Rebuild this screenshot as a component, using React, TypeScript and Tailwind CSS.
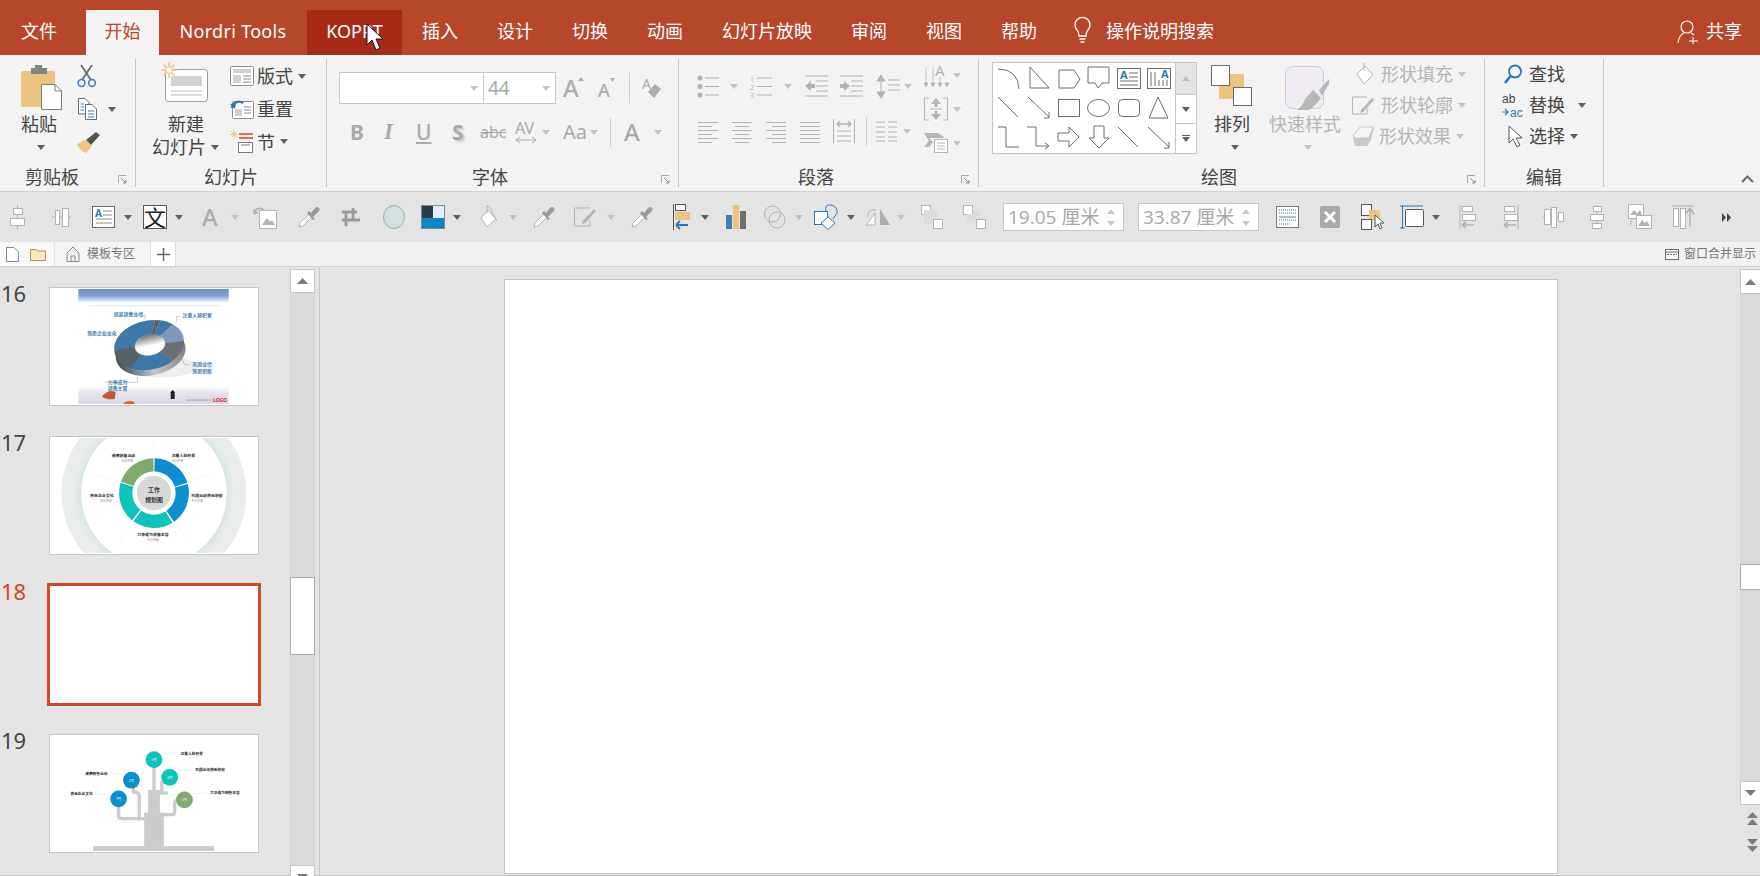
import type { ReactNode } from "react"

const G = "#b3b3b3"
const D = "#6a6a6a"

function Svg({ w, h, className, children }: { w: number; h: number; className?: string; children: ReactNode }) {
  return (
    <svg width={w} height={h} viewBox={`0 0 ${w} ${h}`} fill="none" className={`block shrink-0 overflow-visible ${className ?? ""}`}>
      {children}
    </svg>
  )
}

function Caret({ off, className }: { off?: boolean; className?: string }) {
  return (
    <Svg w={8} h={5} className={className}>
      <path d="M0 0H8L4 5Z" fill={off ? "#c2c2c2" : "#5f5f5f"} />
    </Svg>
  )
}

function Launcher() {
  return (
    <Svg w={9} h={9}>
      <path d="M.5 8V.5H8" stroke="#a8a8a8" />
      <path d="M3 3L8 8M8 5V8H5" stroke="#8a8a8a" />
    </Svg>
  )
}

function Group({ className, labelClass, label, launcher, children }: { className: string; labelClass: string; label: string; launcher?: boolean; children: ReactNode }) {
  return (
    <div className={`relative flex h-[128px] shrink-0 flex-col border-r border-[#c6c6c6] ${className}`}>
      <div className="flex h-[108px] items-start">{children}</div>
      <div className={`text-[18px] leading-[20px] text-[#444] ${labelClass}`}>{label}</div>
      {launcher && (
        <div className="absolute bottom-[3px] right-[8px]">
          <Launcher />
        </div>
      )}
    </div>
  )
}

function Lines({ rows, className, color = G }: { rows: [number, number][]; className?: string; color?: string }) {
  return (
    <Svg w={22} h={22} className={className}>
      {rows.map(([a, b], i) => (
        <path key={i} d={`M${a} ${2.5 + i * 4}H${b}`} stroke={color} strokeWidth="1" />
      ))}
    </Svg>
  )
}

function Dropper({ className }: { className?: string }) {
  return (
    <Svg w={23} h={24} className={className}>
      <path d="M2 22L3 18L13 8L16 11L6 21Z" stroke={G} fill="#fff" />
      <path d="M12 6L14 8L18 3Q20 1 22 3T20 8L16 12L18 14L16 15L10 8Z" fill="#9a9a9a" />
    </Svg>
  )
}

function PaperRect({ x, y, w, h, fill = "#fff", stroke = G }: { x: number; y: number; w: number; h: number; fill?: string; stroke?: string }) {
  return <rect x={x + 0.5} y={y + 0.5} width={w} height={h} fill={fill} stroke={stroke} />
}

function AlignIcon({ className, w = 18, flip }: { className?: string; w?: number; flip?: boolean }) {
  return (
    <Svg w={w} h={24} className={className}>
      <path d={flip ? `M${w - 1} 0V24` : "M1 0V24"} stroke={G} />
      <PaperRect x={3} y={1} w={10} h={5} />
      <PaperRect x={3} y={9} w={13} h={6} />
      <path d="M3 20H15M3 20L7 17M3 20L7 23" stroke={G} strokeWidth="1.6" />
    </Svg>
  )
}

function Shape({ children }: { children: ReactNode }) {
  return (
    <Svg w={24} h={24}>
      <g stroke="#6d6d6d" strokeWidth="1" fill="none">
        {children}
      </g>
    </Svg>
  )
}

const shapes: ReactNode[] = [
  <path d="M1 3Q21 3 22 23" />,
  <path d="M3 1V22H22Z" />,
  <path d="M2 4H17L23 13L17 22H2Z" />,
  <path d="M1 1H22V17H15L11 22L8 17H1Z" />,
  <>
    <rect x=".5" y="2.5" width="23" height="20" />
    <text x="3" y="13" fontSize="11" fontWeight="700" fill="#2e75b6" stroke="none">A</text>
    <path d="M12 7H21M12 11H21M3 15H21M3 19H21" />
  </>,
  <>
    <rect x=".5" y="2.5" width="23" height="20" />
    <text x="14" y="12" fontSize="11" fontWeight="700" fill="#2e75b6" stroke="none">A</text>
    <path d="M4 6V20M8 6V20M12 14V20M16 14V20M20 14V20" />
  </>,
  <path d="M1 1L21 21" />,
  <>
    <path d="M1 1L22 21" />
    <path d="M22 16V22H17" />
  </>,
  <rect x="1.5" y="3.5" width="21" height="17" />,
  <ellipse cx="11.5" cy="12" rx="11" ry="8.5" />,
  <rect x="1.5" y="3.5" width="21" height="17" rx="4" />,
  <path d="M11 1L2 22H21Z" />,
  <path d="M1 1H9V21H22" />,
  <>
    <path d="M0 1H9V20H21" />
    <path d="M18 17L22 20L18 23" />
  </>,
  <path d="M1 7H12V1L22 11L12 21V15H1Z" />,
  <path d="M7 0H17V12H22L12 22L2 12H7Z" />,
  <path d="M1 1L21 21" />,
  <>
    <path d="M1 1L22 21" />
    <path d="M22 16V22H17" />
  </>,
]

function sector(cx: number, cy: number, rx: number, ry: number, k: number, a: number, b: number) {
  const p = (t: number, rr: number) => {
    const r = (t * Math.PI) / 180
    return `${(cx + rx * rr * Math.cos(r)).toFixed(2)} ${(cy + ry * rr * Math.sin(r)).toFixed(2)}`
  }
  const big = b - a > 180 ? 1 : 0
  return `M${p(a, 1)}A${rx} ${ry} 0 ${big} 1 ${p(b, 1)}L${p(b, k)}A${rx * k} ${ry * k} 0 ${big} 0 ${p(a, k)}Z`
}

function ThumbSix() {
  return (
    <svg viewBox="0 0 210 119" className="block h-full w-full">
      <defs>
        <linearGradient id="sky" x1="0" y1="0" x2="0" y2="1">
          <stop offset="0" stopColor="#6c92cb" />
          <stop offset="0.5" stopColor="#7f9fd0" />
          <stop offset="1" stopColor="#ffffff" />
        </linearGradient>
        <linearGradient id="floor" x1="0" y1="0" x2="0" y2="1">
          <stop offset="0" stopColor="#ffffff" />
          <stop offset="0.4" stopColor="#e6e1ec" />
          <stop offset="1" stopColor="#dcd7e6" />
        </linearGradient>
        <linearGradient id="hole" x1="0" y1="0" x2="0" y2="1">
          <stop offset="0" stopColor="#6c7274" />
          <stop offset="0.55" stopColor="#ffffff" />
        </linearGradient>
        <linearGradient id="side" x1="0" y1="0" x2="1" y2="0">
          <stop offset="0" stopColor="#3f4a50" />
          <stop offset="0.5" stopColor="#c4c8ca" />
          <stop offset="1" stopColor="#7c8082" />
        </linearGradient>
      </defs>
      <rect x="28" y="1" width="153" height="14" fill="url(#sky)" />
      <path d="M39 18H172" stroke="#bbb" strokeWidth=".6" strokeDasharray="1 .6" />
      <rect x="28" y="100" width="153" height="18" fill="url(#floor)" />
      <ellipse cx="112" cy="80" rx="38" ry="11" fill="#eee" />
      <g transform="rotate(-12 100 58)">
        <ellipse cx="100" cy="66" rx="36" ry="23" fill="url(#side)" />
        <path d={sector(100, 58, 36, 25, 0.42, 185, 288)} fill="#3d78a9" />
        <path d={sector(100, 58, 36, 25, 0.42, 288, 298)} fill="#566268" />
        <path d={sector(100, 58, 36, 25, 0.42, 298, 322)} fill="#3d78a9" />
        <path d={sector(100, 58, 36, 25, 0.42, 322, 368)} fill="#7f99bd" />
        <path d={sector(100, 58, 36, 25, 0.42, 8, 55)} fill="#6d7072" />
        <path d={sector(100, 58, 36, 25, 0.42, 55, 130)} fill="#3d78a9" />
        <path d={sector(100, 58, 36, 25, 0.42, 130, 185)} fill="#566268" />
        <ellipse cx="101" cy="58" rx="15.500" ry="10.500" fill="url(#hole)" />
      </g>
      <path d="M88 28H96V32M131 29H128V35M141 78H136L133 70M55 96H88V90M56 47H67" fill="none" stroke="#aaa" strokeWidth=".6" />
      <g fontSize="5" fontWeight="700" fill="#4d7fb0">
        <text x="64" y="28">提高销售业绩</text>
        <text x="134" y="30">注重人脉积累</text>
        <text x="37" y="48">熟悉企业文化</text>
        <text x="144" y="79">巩固业绩</text>
        <text x="144" y="86">熟悉职能</text>
        <text x="58" y="98">力争成为</text>
        <text x="58" y="104">销售主管</text>
      </g>
      <path d="M52 110Q60 102 66 106L65 113Q56 114 52 110Z" fill="#c8582e" />
      <path d="M73 118Q78 113 85 116V118Z" fill="#d9662e" />
      <path d="M122 106Q124 102 126 106V113H122Z" fill="#222" />
      <text x="165" y="116" fontSize="5" fontWeight="700" fill="#c8281e">LOGO</text>
      <path d="M138 114H164" stroke="#777" strokeWidth=".7" strokeDasharray="1 .4" />
    </svg>
  )
}

function ThumbSeven() {
  return (
    <svg viewBox="0 0 210 119" className="block h-full w-full">
      <defs>
        <radialGradient id="halo" gradientUnits="userSpaceOnUse" cx="105" cy="57" r="95">
          <stop offset="0.78" stopColor="#d8e6e5" />
          <stop offset="0.86" stopColor="#e8ecec" />
          <stop offset="1" stopColor="#ececec" />
        </radialGradient>
      </defs>
      <clipPath id="c17">
        <rect x="0" y="1" width="210" height="117" />
      </clipPath>
      <g clipPath="url(#c17)">
        <circle cx="105" cy="57" r="94" fill="url(#halo)" />
        <circle cx="105" cy="57" r="74" fill="#fff" />
        <g stroke="#eee" strokeWidth=".6">
          <path d="M105 1V22M163 38L131 48M140 106L123 82M70 106L87 82M45 38L80 48" />
        </g>
        <path d={sector(105, 57, 35.5, 35.5, 0.62, -89, -17)} fill="#0b8fd0" />
        <path d={sector(105, 57, 35.5, 35.5, 0.62, -15, 55)} fill="#0b8fd0" />
        <path d={sector(105, 57, 35.5, 35.5, 0.62, 58, 126)} fill="#0cc4bb" />
        <path d={sector(105, 57, 35.5, 35.5, 0.62, 129, 197)} fill="#0cc4bb" />
        <path d={sector(105, 57, 35.5, 35.5, 0.62, 199, 269)} fill="#80a96f" />
        <circle cx="105" cy="57" r="17.5" fill="#d8d8d8" />
        <g fill="#333" fontWeight="700">
          <text x="105" y="56" fontSize="6" textAnchor="middle">工作</text>
          <text x="105" y="66" fontSize="6" textAnchor="middle">规划图</text>
          <g fontSize="4">
            <text x="62" y="20">提高销售业绩</text>
            <text x="123" y="20">注重人脉积累</text>
            <text x="143" y="61">巩固业绩熟悉职能</text>
            <text x="88" y="101">力争成为销售主管</text>
            <text x="40" y="61">熟悉企业文化</text>
          </g>
        </g>
        <g fill="#999" fontSize="3">
          <text x="72" y="25">专业技能</text>
          <text x="123" y="25">专业技能</text>
          <text x="143" y="66">专业技能</text>
          <text x="98" y="106">专业技能</text>
          <text x="50" y="66">专业技能</text>
        </g>
      </g>
    </svg>
  )
}

function ThumbNine() {
  return (
    <svg viewBox="0 0 210 119" className="block h-full w-full">
      <rect x="43" y="113" width="123" height="5" fill="#cbcbcb" />
      <rect x="95" y="79" width="20" height="34" fill="#cbcbcb" />
      <rect x="99" y="56" width="12" height="24" fill="#cbcbcb" />
      <g stroke="#cbcbcb" strokeWidth="3.4" fill="none">
        <path d="M105 30V58" />
        <path d="M69 70V82Q69 85 72 85H96" />
        <path d="M84 50V58Q90 58 90 62V84" />
        <path d="M113 59V48L118 44M110 59H119" />
        <path d="M114 81H124Q126 81 126 78V70Q126 66 130 66" />
      </g>
      <g>
        <circle cx="105" cy="25" r="8.5" fill="#0cc4bb" />
        <circle cx="82" cy="46" r="8.5" fill="#0b8fd0" />
        <circle cx="121" cy="43" r="8.5" fill="#0cc4bb" />
        <circle cx="69" cy="65" r="8.5" fill="#0b8fd0" />
        <circle cx="136" cy="66" r="8.5" fill="#80a96f" />
      </g>
      <g fill="#fff" fontSize="3.5" textAnchor="middle">
        <text x="105" y="26.5">3月</text>
        <text x="82" y="47.5">2月</text>
        <text x="121" y="44.5">4月</text>
        <text x="69" y="66.5">1月</text>
        <text x="136" y="67.5">5月</text>
      </g>
      <g stroke="#e2eef7" strokeWidth=".8">
        <path d="M113 19L129 18M61 39H75M45 60H60M129 36L145 35M144 60L160 59" />
      </g>
      <g fill="#333" fontSize="3.8" fontWeight="700">
        <text x="132" y="20">注重人脉积累</text>
        <text x="147" y="37">巩固业绩熟悉职能</text>
        <text x="162" y="60">力争成为销售主管</text>
        <text x="35" y="41">提高销售业绩</text>
        <text x="20" y="61">熟悉企业文化</text>
      </g>
    </svg>
  )
}

function ScrollBtn({ dir, className }: { dir: "up" | "down"; className?: string }) {
  return (
    <div className={`flex shrink-0 items-center justify-center border border-[#c6c6c6] bg-white ${className ?? ""}`}>
      <Svg w={11} h={6}>
        <path d={dir === "up" ? "M0 6L5.5 0L11 6Z" : "M0 0H11L5.5 6Z"} fill="#7a7a7a" />
      </Svg>
    </div>
  )
}

function SizeInput({ value, className }: { value: string; className?: string }) {
  return (
    <div className={`flex h-[28px] w-[121px] shrink-0 items-center justify-between border border-[#c6c6c6] bg-white pl-[4px] pr-[8px] ${className ?? ""}`}>
      <span className="font-['Open_Sans','Noto_Sans_CJK_SC',sans-serif] text-[19px] leading-[26px] text-[#a8a8a8]">{value}</span>
      <span className="flex flex-col gap-[7px]">
        <Svg w={8} h={5}>
          <path d="M0 5L4 0L8 5Z" fill="#c8c8c8" />
        </Svg>
        <Svg w={8} h={5}>
          <path d="M0 0H8L4 5Z" fill="#c8c8c8" />
        </Svg>
      </span>
    </div>
  )
}

export default function App() {
  return (
    <div className="flex h-[876px] w-[1760px] flex-col overflow-hidden bg-[#e4e4e4] font-['Noto_Sans','Noto_Sans_CJK_SC',sans-serif]">
      {/* title tabs */}
      <div className="relative flex h-[55px] shrink-0 items-end bg-[#b7472a] text-[18px] text-white">
        <div className="flex h-[45px] w-[86px] items-center pb-[2px] pl-[21px]">文件</div>
        <div className="flex h-[45px] w-[73px] items-center justify-center bg-[#f3f3f3] pb-[2px] text-[#b7472a]">开始</div>
        <div className="flex h-[45px] w-[148px] items-center justify-center pb-[2px] tracking-[0.3px]">Nordri Tools</div>
        <div className="flex h-[45px] w-[95px] items-center justify-center bg-[#a72a17] pb-[2px]">KOPPT</div>
        <div className="ml-[20px] flex h-[45px] items-center gap-[39px] pb-[2px]">
          <span>插入</span>
          <span>设计</span>
          <span>切换</span>
          <span>动画</span>
          <span>幻灯片放映</span>
          <span>审阅</span>
          <span>视图</span>
          <span>帮助</span>
        </div>
        <div className="ml-[37px] flex h-[45px] items-center pb-[2px]">
          <Svg w={17} h={25}>
            <path d="M5 17Q5 13 3 11A7.500 7.500 0 1 1 14 11Q12 13 12 17Z" stroke="#fff" strokeWidth="1.300" />
            <path d="M5.500 20H11.500M6.500 23H10.500" stroke="#fff" strokeWidth="1.600" />
          </Svg>
          <span className="ml-[15px]">操作说明搜索</span>
        </div>
        <div className="ml-auto mr-[18px] flex h-[45px] items-center pb-[2px]">
          <Svg w={22} h={24}>
            <circle cx="10" cy="7" r="6" stroke="#fff" strokeWidth="1.100" />
            <path d="M1 23Q2 15 7 13M14 13Q16 14 17 15M16 17V24M12 21H21" stroke="#fff" strokeWidth="1.100" />
          </Svg>
          <span className="ml-[7px]">共享</span>
        </div>
        {/* mouse pointer over the KOPPT tab */}
        <div className="absolute left-[366px] top-[23px]">
          <Svg w={19} h={28}>
            <path d="M1 1V22L6 17L10 27L14 25L10 16H17Z" fill="#fff" stroke="#111" />
          </Svg>
        </div>
      </div>

      {/* ribbon */}
      <div className="flex h-[137px] shrink-0 border-b border-[#d2d2d2] bg-[#f3f3f3] pt-[4px]">
        <Group className="w-[136px]" label="剪贴板" labelClass="ml-[25px]" launcher>
          <div className="ml-[21px] flex w-[42px] flex-col">
            <Svg w={41} h={45} className="mt-[6px]">
              <rect x="0" y="6" width="34" height="36" rx="2" fill="#ecc47f" />
              <path d="M10 6V3H14V0H21V3H26V9H10Z" fill="#7f8583" />
              <path d="M20.500 19.500H34L40.500 26V44.500H20.500Z" fill="#fff" stroke="#7a7a7a" />
              <path d="M34 19.500V26H40.500" stroke="#7a7a7a" />
            </Svg>
            <span className="mt-[5px] text-[18px] leading-[18px] text-[#444]">粘贴</span>
            <Caret className="ml-[16px] mt-[12px]" />
          </div>
          <div className="ml-[14px] flex flex-col">
            <Svg w={20} h={22} className="mt-[6px]">
              <path d="M4 0L14 15M15 0L5 15" stroke="#6a6a6a" strokeWidth="1.800" />
              <circle cx="4.500" cy="18" r="3.400" stroke="#3f7eb5" strokeWidth="1.500" />
              <circle cx="15" cy="18" r="3.400" stroke="#3f7eb5" strokeWidth="1.500" />
            </Svg>
            <div className="mt-[11px] flex items-center">
              <Svg w={20} h={22}>
                <path d="M1.500 .5H8L12 4.500V16H1.500Z" fill="#fff" stroke="#6a6a6a" />
                <path d="M8.500 6.500H15L19.500 11V21.500H8.500Z" fill="#fff" stroke="#6a6a6a" />
                <path d="M3.500 6H7M3.500 9H7M3.500 12H7M11 13H17M11 16H17M11 19H17" stroke="#3f7eb5" />
              </Svg>
              <Caret className="ml-[11px]" />
            </div>
            <Svg w={23} h={21} className="mt-[12px]">
              <path d="M0 12L8 8L15 14L9 21Q4 20 0 12Z" fill="#ecc47f" />
              <path d="M9 8L14 13L23 3L19 0Z" fill="#555" />
            </Svg>
          </div>
        </Group>

        <Group className="w-[191px]" label="幻灯片" labelClass="ml-[68px]">
          <div className="ml-[16px] flex w-[72px] flex-col">
            <Svg w={48} h={41} className="ml-[9px] mt-[3px]">
              <rect x="4.500" y="7.500" width="42" height="32" rx="3" fill="#fff" stroke="#9a9a9a" />
              <rect x="10" y="14" width="31" height="10" fill="#d3d3d3" />
              <path d="M10 29H41M10 33H41" stroke="#bdbdbd" />
              <path d="M8 0V16M0 8H16M2.500 2.500L13.500 13.500M13.500 2.500L2.500 13.500" stroke="#ecc47f" strokeWidth="1.500" />
              <circle cx="8" cy="8" r="3.500" fill="#f3f3f3" stroke="#ecc47f" />
            </Svg>
            <span className="ml-[16px] mt-[12px] text-[18px] leading-[18px] text-[#444]">新建</span>
            <div className="mt-[5px] flex items-center">
              <span className="text-[18px] leading-[18px] text-[#444]">幻灯片</span>
              <Caret className="ml-[5px]" />
            </div>
          </div>
          <div className="ml-[6px] flex flex-col">
            <div className="mt-[7px] flex h-[20px] items-center">
              <Svg w={24} h={20}>
                <rect x=".5" y=".5" width="23" height="19" rx="1" fill="#fff" stroke="#8a8a8a" />
                <rect x="3" y="3" width="18" height="4" fill="#cfcfcf" />
                <rect x="3" y="9" width="8" height="8" fill="#cfcfcf" />
                <path d="M13 10H21M13 13H21M13 16H21" stroke="#8a8a8a" />
              </Svg>
              <span className="ml-[3px] text-[18px] leading-[18px] text-[#444]">版式</span>
              <Caret className="ml-[5px]" />
            </div>
            <div className="mt-[13px] flex h-[20px] items-center">
              <Svg w={24} h={20}>
                <rect x="2.500" y="2.500" width="21" height="17" rx="1" fill="#fff" stroke="#8a8a8a" />
                <rect x="5" y="10" width="7" height="7" fill="#cfcfcf" />
                <path d="M14 8H21M14 11H21M14 14H21" stroke="#8a8a8a" />
                <path d="M2 9A7 7 0 0 1 13 4" stroke="#2e75b6" strokeWidth="2.400" />
                <path d="M0 5L5 10L6 4Z" fill="#2e75b6" />
              </Svg>
              <span className="ml-[3px] text-[18px] leading-[18px] text-[#444]">重置</span>
            </div>
            <div className="mt-[11px] flex h-[23px] items-center">
              <Svg w={24} h={23}>
                <path d="M4 0V9M0 4.500H8M1.500 1.500L6.500 7.500M6.500 1.500L1.500 7.500" stroke="#ecc47f" />
                <path d="M9 4H23M9 8H23" stroke="#d24726" strokeWidth="1.300" />
                <rect x="8.500" y="12.500" width="14" height="10" fill="#fff" stroke="#7a7a7a" />
                <path d="M11 15H20" stroke="#7a7a7a" />
              </Svg>
              <span className="ml-[3px] text-[18px] leading-[18px] text-[#444]">节</span>
              <Caret className="ml-[5px]" />
            </div>
          </div>
        </Group>

        <Group className="w-[352px]" label="字体" labelClass="ml-[145px]" launcher>
          <div className="flex flex-col">
            <div className="ml-[12px] mt-[13px] flex h-[32px] items-center">
              <div className="flex h-[32px] w-[145px] items-center justify-end border border-[#c6c6c6] bg-white pr-[5px]">
                <Caret off />
              </div>
              <div className="flex h-[32px] w-[72px] items-center justify-between border border-l-0 border-[#c6c6c6] bg-white pl-[4px] pr-[5px]">
                <span className="text-[19px] text-[#a8a8a8]">44</span>
                <Caret off />
              </div>
              <div className="ml-[7px] flex h-[32px] w-[21px] items-start">
                <span className="text-[24px] font-medium leading-[32px] text-[#adadad]">A</span>
                <Svg w={6} h={4} className="-ml-[1px] mt-[5px]">
                  <path d="M0 4L3 0L6 4Z" fill="#adadad" />
                </Svg>
              </div>
              <div className="ml-[14px] flex h-[32px] w-[15px] items-start">
                <span className="mt-[3px] text-[18px] font-medium leading-[30px] text-[#adadad]">A</span>
                <Svg w={5} h={4} className="mt-[6px]">
                  <path d="M0 0H5L2.500 4Z" fill="#adadad" />
                </Svg>
              </div>
              <div className="ml-[16px] h-[30px] w-px bg-[#d0d0d0]" />
              <Svg w={19} h={22} className="ml-[12px]">
                <text x="0" y="12" fontSize="14" fill="#adadad">A</text>
                <path d="M6 15L13 7L19 12L12 21Z" fill="#adadad" />
              </Svg>
            </div>
            <div className="ml-[23px] mt-[16px] flex h-[24px] items-center text-[#a9a9a9]">
              <span className="w-[13px] text-[21px] font-bold leading-[24px]">B</span>
              <span className="ml-[21px] w-[11px] font-['Liberation_Serif',serif] text-[23px] font-bold italic leading-[24px]">I</span>
              <span className="ml-[21px] w-[14px] text-[21px] font-medium underline leading-[24px]">U</span>
              <span className="ml-[22px] w-[12px] text-[21px] font-bold leading-[24px] [text-shadow:2px_2px_2px_#c8c8c8]">S</span>
              <span className="ml-[16px] w-[24px] text-[16px] leading-[24px] line-through">abc</span>
              <Svg w={22} h={24} className="ml-[11px]">
                <text x="0" y="14" fontSize="16" fill="#a9a9a9">AV</text>
                <path d="M1 20H21M1 20L5 17M1 20L5 23M21 20L17 17M21 20L17 23" stroke="#adadad" />
              </Svg>
              <Caret off className="ml-[5px]" />
              <span className="ml-[13px] w-[23px] text-[20px] leading-[24px]">Aa</span>
              <Caret off className="ml-[4px]" />
              <div className="ml-[12px] h-[29px] w-px bg-[#d0d0d0]" />
              <span className="ml-[13px] w-[15px] text-[24px] font-medium leading-[24px]">A</span>
              <Caret off className="ml-[15px]" />
            </div>
          </div>
        </Group>

        <Group className="w-[300px]" label="段落" labelClass="ml-[119px]" launcher>
          <div className="flex w-[245px] flex-col">
            <div className="mt-[16px] flex h-[23px] items-center">
              <Svg w={22} h={23} className="ml-[18px]">
                <circle cx="3" cy="3" r="2.500" fill={G} />
                <circle cx="3" cy="11.500" r="2.500" fill={G} />
                <circle cx="3" cy="20" r="2.500" fill={G} />
                <path d="M8 3H22M8 11.500H22M8 20H22" stroke={G} />
              </Svg>
              <Caret off className="ml-[11px]" />
              <Svg w={22} h={23} className="ml-[12px]">
                <text x="0" y="7" fontSize="7" fill={G}>1</text>
                <text x="0" y="15" fontSize="7" fill={G}>2</text>
                <text x="0" y="23" fontSize="7" fill={G}>3</text>
                <path d="M7 3H22M7 11.500H22M7 20H22" stroke={G} />
              </Svg>
              <Caret off className="ml-[12px]" />
              <Svg w={23} h={23} className="ml-[13px]">
                <path d="M0 1H23M11 6H23M11 11H23M11 16H23M0 21H23" stroke={G} />
                <path d="M0 11L6 6V9H10V13H6V16Z" fill={G} />
              </Svg>
              <Svg w={23} h={23} className="ml-[12px]">
                <path d="M0 1H23M11 6H23M11 11H23M11 16H23M0 21H23" stroke={G} />
                <path d="M10 11L4 6V9H0V13H4V16Z" fill={G} />
              </Svg>
              <Svg w={23} h={23} className="ml-[14px]">
                <path d="M4 1V22M4 0L8 6H0ZM4 23L0 17H8Z" fill={G} stroke={G} />
                <path d="M11 5H23M11 10H23M11 15H23" stroke={G} />
              </Svg>
              <Caret off className="ml-[4px]" />
            </div>
            <div className="mt-[22px] flex h-[22px] items-center">
              <Lines className="ml-[19px] -mr-[2px]" rows={[[0, 20], [0, 14], [0, 20], [0, 14], [0, 20], [0, 14]]} />
              <Lines className="ml-[14px] -mr-[2px]" rows={[[0, 20], [3, 17], [0, 20], [3, 17], [0, 20], [3, 17]]} />
              <Lines className="ml-[14px] -mr-[2px]" rows={[[0, 20], [6, 20], [0, 20], [6, 20], [0, 20], [6, 20]]} />
              <Lines className="ml-[14px] -mr-[2px]" rows={[[0, 20], [0, 20], [0, 20], [0, 20], [0, 20], [0, 20]]} />
              <Svg w={22} h={24} className="ml-[13px]">
                <path d="M.5 0V24M21.500 0V24M4 12H18M4 17H18M4 22H18" stroke={G} />
                <path d="M4 5H18M4 5L7 2M4 5L7 8M18 5L15 2M18 5L15 8" stroke={G} strokeWidth="1.300" />
              </Svg>
              <div className="ml-[11px] h-[29px] w-px bg-[#d0d0d0]" />
              <Svg w={21} h={22} className="ml-[9px]">
                <path d="M0 2H9M12 2H21M0 7H9M12 7H21M0 12H9M12 12H21M0 17H9M12 17H21M0 21H9M12 21H21" stroke={G} />
              </Svg>
              <Caret off className="ml-[6px]" />
            </div>
          </div>
          <div className="flex flex-col">
            <div className="mt-[4px] flex h-[25px] items-center">
              <Svg w={24} h={25}>
                <path d="M2 4V23M9 4V23M16 14V23M2 24L0 20H4ZM9 24L7 20H11ZM16 24L14 20H18ZM23 24L21 20H25Z" stroke={G} fill={G} strokeWidth=".7" />
                <text x="11" y="13" fontSize="15" fill={G}>A</text>
              </Svg>
              <Caret off className="ml-[5px]" />
            </div>
            <div className="mt-[9px] flex h-[24px] items-center">
              <Svg w={24} h={24}>
                <path d="M5 1H.5V23H5M19 1H23.500V23H19" stroke={G} />
                <path d="M12 1L7 7H10.500V10H13.500V7H17ZM12 23L7 17H10.500V14H13.500V17H17Z" fill={G} />
                <path d="M6 12H18" stroke={G} />
              </Svg>
              <Caret off className="ml-[5px]" />
            </div>
            <div className="mt-[12px] flex h-[20px] items-center">
              <Svg w={24} h={20}>
                <path d="M0 0H14L21 5H5L9 9L5 14H0L5 8Z" fill={G} />
                <rect x="10.500" y="6.500" width="13" height="13" fill="#fff" stroke={G} />
                <path d="M13 10H21M13 13H21M13 16H21" stroke={G} />
              </Svg>
              <Caret off className="ml-[5px]" />
            </div>
          </div>
        </Group>

        <Group className="w-[506px]" label="绘图" labelClass="ml-[222px]" launcher>
          <div className="ml-[13px] mt-[3px] flex h-[92px] w-[205px] shrink-0 border border-[#c6c6c6] bg-white">
            <div className="grid h-full w-[182px] grid-cols-[repeat(6,30px)] grid-rows-[repeat(3,30px)] pl-[4px] pt-[3px]">
              {shapes.map((s, i) => (
                <Shape key={i}>{s}</Shape>
              ))}
            </div>
            <div className="flex w-[22px] flex-col border-l border-[#c6c6c6]">
              <div className="flex h-[32px] items-center justify-center border-b border-[#c6c6c6] bg-[#e4e4e4]">
                <Svg w={8} h={5}>
                  <path d="M0 5L4 0L8 5Z" fill="#c2c2c2" />
                </Svg>
              </div>
              <div className="flex h-[29px] items-center justify-center border-b border-[#c6c6c6]">
                <Caret />
              </div>
              <div className="flex flex-1 flex-col items-center justify-center gap-[1px]">
                <div className="h-[1px] w-[8px] bg-[#5f5f5f]" />
                <Caret />
              </div>
            </div>
          </div>
          <div className="ml-[14px] flex w-[41px] shrink-0 flex-col">
            <Svg w={41} h={41} className="mt-[6px]">
              <rect x="8" y="9" width="25" height="25" fill="#ecc47f" />
              <rect x="14" y="0" width="13" height="9" fill="#f3f3f3" />
              <rect x=".5" y=".5" width="18" height="20" fill="#fff" stroke="#6a6a6a" />
              <rect x="22.500" y="22.500" width="18" height="18" fill="#fff" stroke="#6a6a6a" />
            </Svg>
            <span className="ml-[3px] mt-[9px] text-[18px] leading-[18px] text-[#444]">排列</span>
            <Caret className="ml-[20px] mt-[12px]" />
          </div>
          <div className="ml-[17px] flex w-[72px] shrink-0 flex-col">
            <Svg w={44} h={44} className="ml-[16px] mt-[7px]">
              <rect x=".5" y=".5" width="38" height="42" rx="7" fill="#f1ecf3" stroke="#cfcfcf" />
              <path d="M34 24L44 13V18L37 30Z" fill="#b7b7b7" />
              <path d="M12 44Q18 40 20 33L28 24L36 32Q28 42 24 44Z" fill="#b7b7b7" />
            </Svg>
            <span className="mt-[5px] whitespace-nowrap text-[18px] leading-[18px] text-[#b5b5b5]">快速样式</span>
            <Caret off className="ml-[35px] mt-[12px]" />
          </div>
          <div className="ml-[11px] flex flex-col">
            <div className="mt-[1px] flex h-[28px] items-center">
              <Svg w={19} h={22} className="ml-[3px]">
                <path d="M2 11L10 3L18 12L9 21Z" fill="#fff" stroke={G} />
                <path d="M9 0V8" stroke={G} />
              </Svg>
              <span className="ml-[7px] whitespace-nowrap text-[18px] leading-[18px] text-[#b5b5b5]">形状填充</span>
              <Caret off className="ml-[5px]" />
            </div>
            <div className="mt-[3px] flex h-[28px] items-center">
              <Svg w={23} h={19}>
                <path d="M15 1H.5V18H15V12" stroke={G} />
                <path d="M9 14L8 17L11 16L22 4L20 2Z" fill={G} />
              </Svg>
              <span className="ml-[6px] whitespace-nowrap text-[18px] leading-[18px] text-[#b5b5b5]">形状轮廓</span>
              <Caret off className="ml-[5px]" />
            </div>
            <div className="mt-[3px] flex h-[28px] items-center">
              <Svg w={23} h={21}>
                <path d="M1 11L8 1H22L19 14L15 20H3Z" fill="#c9c9c9" />
                <path d="M1 10L8 1H21L17 12H3Z" fill="#f4f4f4" stroke="#c9c9c9" />
              </Svg>
              <span className="ml-[4px] whitespace-nowrap text-[18px] leading-[18px] text-[#b5b5b5]">形状效果</span>
              <Caret off className="ml-[5px]" />
            </div>
          </div>
        </Group>

        <Group className="w-[119px]" label="编辑" labelClass="ml-[41px]">
          <div className="flex flex-col">
            <div className="mt-[1px] flex h-[28px] items-center">
              <Svg w={23} h={20} className="ml-[17px]">
                <circle cx="13" cy="7.500" r="6" stroke="#2e75b6" strokeWidth="1.800" />
                <path d="M8.500 12L3 19" stroke="#2e75b6" strokeWidth="2.600" />
              </Svg>
              <span className="ml-[4px] text-[18px] leading-[18px] text-[#444]">查找</span>
            </div>
            <div className="mt-[3px] flex h-[28px] items-center">
              <Svg w={23} h={23} className="ml-[17px]">
                <text x="0" y="9" fontSize="12" fontFamily="Liberation Sans" fill="#444">ab</text>
                <text x="8" y="23" fontSize="12" fontFamily="Liberation Sans" fill="#2e75b6">ac</text>
                <path d="M0 18H6M3 15L6 18L3 21" stroke="#2e75b6" strokeWidth="1.200" />
              </Svg>
              <span className="ml-[4px] text-[18px] leading-[18px] text-[#444]">替换</span>
              <Caret className="ml-[13px]" />
            </div>
            <div className="mt-[3px] flex h-[28px] items-center">
              <Svg w={15} h={23} className="ml-[23px]">
                <path d="M1 1V18L5 14L9 22L12 20L8 13H14Z" fill="#fff" stroke="#555" />
              </Svg>
              <span className="ml-[6px] text-[18px] leading-[18px] text-[#444]">选择</span>
              <Caret className="ml-[5px]" />
            </div>
          </div>
        </Group>

        <Svg w={13} h={8} className="mb-[8px] ml-[137px] self-end">
          <path d="M1 7L6.500 1.500L12 7" stroke={D} strokeWidth="2" />
        </Svg>
      </div>

      {/* quick tools */}
      <div className="flex h-[50px] shrink-0 items-center bg-[#e4e4e4]">
        <Svg w={15} h={24} className="ml-[10px]">
          <path d="M7.500 0V24" stroke={G} />
          <PaperRect x={3} y={3} w={9} h={6} />
          <PaperRect x={0} y={13} w={14} h={7} />
        </Svg>
        <Svg w={19} h={24} className="ml-[27px]">
          <path d="M0 12H19" stroke={G} />
          <PaperRect x={3} y={5} w={4} h={14} />
          <PaperRect x={10} y={3} w={6} h={18} />
        </Svg>
        <Svg w={23} h={22} className="ml-[21px]">
          <rect x=".5" y=".5" width="22" height="21" fill="#fff" stroke="#6a6a6a" />
          <text x="3" y="11" fontSize="10" fontWeight="700" fill="#2e75b6">A</text>
          <path d="M11 5H20M11 9H20M4 13H20M4 17H20" stroke="#8a8a8a" />
        </Svg>
        <Caret className="ml-[9px]" />
        <div className="ml-[11px] flex h-[24px] w-[24px] shrink-0 items-center justify-center border border-[#555] bg-white text-[22px] leading-[22px] text-[#222]">文</div>
        <Caret className="ml-[8px]" />
        <span className="ml-[19px] w-[15px] text-[24px] font-medium leading-[24px] text-[#adadad]">A</span>
        <Caret off className="ml-[14px]" />
        <Svg w={24} h={24} className="ml-[14px]">
          <rect x="6.500" y="5.500" width="17" height="18" fill="#fff" stroke={G} />
          <path d="M9 20L14 13L17 17L19 15L22 20Z" fill={G} />
          <path d="M1 8A6 6 0 0 1 11 5" stroke={G} strokeWidth="1.800" />
          <path d="M0 4L1 10L6 8Z" fill={G} />
        </Svg>
        <Dropper className="ml-[20px]" />
        <Svg w={18} h={18} className="ml-[22px]">
          <path d="M11 0V12H18M0 4H15M4 4V18M0 12H12" stroke="#9a9a9a" strokeWidth="2.800" />
        </Svg>
        <Svg w={22} h={24} className="ml-[23px]">
          <ellipse cx="11" cy="12" rx="10.500" ry="11.500" fill="#cfe0df" stroke="#9aaeab" />
        </Svg>
        <Svg w={24} h={24} className="ml-[16px]">
          <rect x=".5" y=".5" width="23" height="23" fill="#dff0f8" stroke="#7c8a90" />
          <rect x="1" y="1" width="11" height="12" fill="#2b3a4a" />
          <rect x="1" y="13" width="22" height="10" fill="#0b87c8" />
        </Svg>
        <Caret className="ml-[8px]" />
        <Svg w={18} h={24} className="ml-[18px]">
          <path d="M2 13L9 5L17 14L8 22Z" fill="#fff" stroke={G} />
          <path d="M8 0V8M8 1Q12 1 13 7L18 16" stroke={G} />
        </Svg>
        <Caret off className="ml-[12px]" />
        <Dropper className="ml-[15px]" />
        <Svg w={23} h={20} className="ml-[19px]">
          <path d="M16 1H.5V19H16V13" stroke={G} />
          <path d="M9 14L8 17L11 16L22 4L20 2Z" fill={G} />
        </Svg>
        <Caret off className="ml-[10px]" />
        <Dropper className="ml-[15px]" />
        <Svg w={17} h={26} className="ml-[20px]">
          <path d="M.5 0V26" stroke="#555" />
          <rect x="2.500" y=".5" width="10" height="6" fill="#fff" stroke="#555" />
          <rect x="2" y="8" width="15" height="8" fill="#ecc47f" />
          <path d="M3 21H15M3 21L7 17M3 21L7 25" stroke="#2e75b6" strokeWidth="1.800" />
        </Svg>
        <Caret className="ml-[11px]" />
        <Svg w={20} h={24} className="ml-[17px]">
          <rect x="0" y="10" width="6" height="14" fill="#3f7eb5" />
          <rect x="7" y="0" width="6" height="24" fill="#ecc47f" />
          <rect x="14" y="6" width="6" height="18" fill="#6f6f6f" />
        </Svg>
        <Svg w={22} h={24} className="ml-[18px]">
          <circle cx="8.500" cy="9" r="8" stroke={G} />
          <circle cx="13" cy="15" r="8" stroke={G} />
        </Svg>
        <Caret off className="ml-[9px]" />
        <Svg w={24} h={26} className="ml-[11px]">
          <path d="M12 8Q10 0 17 1Q24 3 23 9L19 15" stroke="#2e75b6" />
          <rect x=".5" y="7.500" width="13" height="13" fill="#fff" stroke="#2e75b6" />
          <path d="M14 13L21 19L14 25.500L7 19Z" fill="#fff" stroke="#2e75b6" />
        </Svg>
        <Caret className="ml-[9px]" />
        <Svg w={25} h={20} className="ml-[10px]">
          <path d="M1 18L10 6V18Z" fill="#fff" stroke={G} />
          <path d="M15 2L25 18H15Z" fill="#adadad" />
          <path d="M3 10A6 6 0 0 1 11 3" stroke={G} />
        </Svg>
        <Caret off className="ml-[7px]" />
        <Svg w={22} h={24} className="ml-[16px]">
          <rect x=".5" y=".5" width="9" height="9" fill="#fff" stroke={G} />
          <rect x="3" y="5" width="14" height="14" fill="#dcdcdc" />
          <rect x="12.500" y="14.500" width="9" height="9" fill="#fff" stroke={G} />
        </Svg>
        <Svg w={23} h={24} className="ml-[20px]">
          <rect x=".5" y=".5" width="9" height="9" fill="#fff" stroke={G} />
          <rect x="4" y="9" width="8" height="7" fill="#dcdcdc" />
          <rect x="10" y="6" width="7" height="7" fill="#dcdcdc" />
          <rect x="13.500" y="14.500" width="9" height="9" fill="#fff" stroke={G} />
        </Svg>
        <SizeInput value="19.05 厘米" className="ml-[17px]" />
        <SizeInput value="33.87 厘米" className="ml-[14px]" />
        <Svg w={23} h={22} className="ml-[17px]">
          <rect x=".5" y=".5" width="22" height="21" fill="#fff" stroke="#7a7a7a" />
          <path d="M3 4H20M3 7H20M3 14H20M3 18H14" stroke="#2e75b6" strokeDasharray="1 1" />
          <path d="M3 11H20" stroke="#7a7a7a" />
        </Svg>
        <Svg w={20} h={24} className="ml-[21px]">
          <rect x="0" y="1" width="20" height="22" rx="2" fill="#a9a9a9" />
          <path d="M5 7L15 17M15 7L5 17" stroke="#fff" strokeWidth="3" />
        </Svg>
        <Svg w={24} h={26} className="ml-[21px]">
          <rect x=".5" y=".5" width="10" height="11" fill="#fff" stroke="#555" />
          <rect x="8" y="6" width="11" height="11" fill="#ecc47f" />
          <rect x=".5" y="15.500" width="10" height="10" fill="#fff" stroke="#555" />
          <path d="M14 11V23L17 20L19 25L21 24L19 19H23Z" fill="#fff" stroke="#555" />
        </Svg>
        <Svg w={24} h={24} className="ml-[15px]">
          <path d="M0 1H5M2.500 1V23M0 23H5M5 1H23" stroke="#2e75b6" />
          <rect x="5.500" y="4.500" width="18" height="17" rx="1" fill="#fff" stroke="#555" />
        </Svg>
        <Caret className="ml-[8px]" />
        <AlignIcon className="ml-[19px]" />
        <AlignIcon className="ml-[24px]" flip />
        <Svg w={21} h={24} className="ml-[24px]">
          <path d="M0 12H21" stroke={G} />
          <PaperRect x={1} y={4} w={6} h={15} />
          <PaperRect x={8} y={2} w={5} h={20} />
          <PaperRect x={15} y={7} w={5} h={9} />
        </Svg>
        <Svg w={14} h={24} className="ml-[26px]">
          <path d="M7 0V24" stroke={G} />
          <PaperRect x={3} y={1} w={8} h={5} />
          <PaperRect x={0} y={9} w={13} h={6} />
          <PaperRect x={2} y={18} w={9} h={5} />
        </Svg>
        <Svg w={24} h={26} className="ml-[24px]">
          <rect x=".5" y=".5" width="15" height="14" fill="#fff" stroke={G} />
          <path d="M2 11L6 6L9 9L12 6L14 11Z" fill={G} />
          <rect x="8.500" y="11.500" width="15" height="13" fill="#fff" stroke={G} />
          <path d="M10 22L14 16L17 19L19 17L22 22Z" fill={G} />
          <path d="M7 14A5 5 0 0 0 3 21" stroke={G} />
        </Svg>
        <Svg w={22} h={24} className="ml-[20px]">
          <path d="M0 1H22" stroke={G} />
          <PaperRect x={1} y={3} w={5} h={18} />
          <PaperRect x={8} y={3} w={5} h={20} />
          <path d="M18 22V4M18 3L14 9M18 3L22 9" stroke={G} strokeWidth="1.500" />
        </Svg>
        <Svg w={9} h={9} className="ml-[28px]">
          <path d="M0 0L4 4.500L0 9ZM5 0L9 4.500L5 9Z" fill="#444" />
        </Svg>
      </div>

      {/* document tabs */}
      <div className="flex h-[25px] shrink-0 items-center border-b border-[#d0d0d0] bg-[#f1f1f1]">
        <div className="flex h-full w-[55px] items-center border-r border-[#e2e2e2] bg-[#f8f8f8]">
          <Svg w={13} h={15} className="ml-[6px]">
            <path d="M.5.5H8L12.500 5V14.500H.5Z" fill="#fff" stroke="#8a8a8a" />
          </Svg>
          <Svg w={16} h={13} className="ml-[11px]">
            <path d="M.5 1.500H6L7.500 3H15.500V12.500H.5Z" fill="#fbe7b8" stroke="#b9866a" />
          </Svg>
        </div>
        <div className="flex h-full w-[95px] items-center bg-[#f3f5f4]">
          <Svg w={14} h={16} className="ml-[11px]">
            <path d="M1 7L7 1L13 7V15.500H1ZM5 15.500V10H9V15.500" stroke="#8a8a8a" />
          </Svg>
          <span className="ml-[7px] text-[12px] text-[#777]">模板专区</span>
        </div>
        <div className="flex h-full w-[26px] items-center justify-center border-l border-r border-[#dcdcdc] bg-white">
          <Svg w={13} h={13}>
            <path d="M6.500 0V13M0 6.500H13" stroke="#666" strokeWidth="1.500" />
          </Svg>
        </div>
        <Svg w={14} h={11} className="ml-auto">
          <rect x=".5" y=".5" width="13" height="10" fill="#fff" stroke="#666" />
          <path d="M0 3H14" stroke="#666" />
          <path d="M2 5.500H12" stroke="#666" strokeDasharray="2 1" />
        </Svg>
        <span className="ml-[5px] mr-[4px] text-[12px] text-[#777]">窗口合并显示</span>
      </div>

      {/* panes */}
      <div className="flex min-h-0 flex-1 border-b border-[#c6c6c6]">
        <div className="flex w-[320px] shrink-0 border-r border-[#c6c6c6]">
          <div className="flex w-[290px] shrink-0 flex-col gap-[30px] overflow-hidden pt-[20px] text-[22px] leading-[24px] text-[#444]">
            <div className="flex shrink-0">
              <span className="-mt-[6px] w-[49px] pl-[1px]">16</span>
              <div className="h-[119px] w-[210px] border border-[#c6c6c6] bg-white">
                <ThumbSix />
              </div>
            </div>
            <div className="flex shrink-0">
              <span className="-mt-[6px] w-[49px] pl-[1px]">17</span>
              <div className="h-[119px] w-[210px] border border-[#c6c6c6] bg-white">
                <ThumbSeven />
              </div>
            </div>
            <div className="flex shrink-0">
              <span className="-mt-[6px] w-[49px] pl-[1px] text-[#d24726]">18</span>
              <div className="h-[119px] w-[210px] bg-white outline-[3px] outline-offset-[-1px] outline-[#d24726] outline-solid" />
            </div>
            <div className="flex shrink-0">
              <span className="-mt-[6px] w-[49px] pl-[1px]">19</span>
              <div className="h-[119px] w-[210px] border border-[#c6c6c6] bg-white">
                <ThumbNine />
              </div>
            </div>
          </div>
          <div className="mt-[2px] flex h-[620px] w-[25px] shrink-0 flex-col bg-[#d9d9d9]">
            <ScrollBtn dir="up" className="h-[24px]" />
            <div className="mt-[284px] h-[78px] shrink-0 border border-[#ababab] bg-white" />
            <ScrollBtn dir="down" className="mt-[210px] h-[24px]" />
          </div>
        </div>
        <div className="ml-[184px] mt-[12px] h-[595px] w-[1054px] shrink-0 border border-[#c6c6c6] bg-white" />
        <div className="ml-[182px] mt-[2px] flex w-[20px] shrink-0 flex-col items-stretch">
          <ScrollBtn dir="up" className="h-[25px] border-r-0" />
          <div className="flex h-[487px] shrink-0 flex-col bg-[#d9d9d9] pt-[270px]">
            <div className="h-[26px] border border-r-0 border-[#ababab] bg-white" />
          </div>
          <ScrollBtn dir="down" className="h-[24px] border-r-0" />
          <div className="flex flex-col items-center pl-[5px] pt-[7px]">
            <Svg w={11} h={13}>
              <path d="M0 6L5.500 0L11 6ZM0 13L5.500 7L11 13Z" fill="#7a7a7a" />
            </Svg>
            <Svg w={11} h={13} className="mt-[14px]">
              <path d="M0 0H11L5.500 6ZM0 7H11L5.500 13Z" fill="#7a7a7a" />
            </Svg>
          </div>
        </div>
      </div>
    </div>
  )
}
